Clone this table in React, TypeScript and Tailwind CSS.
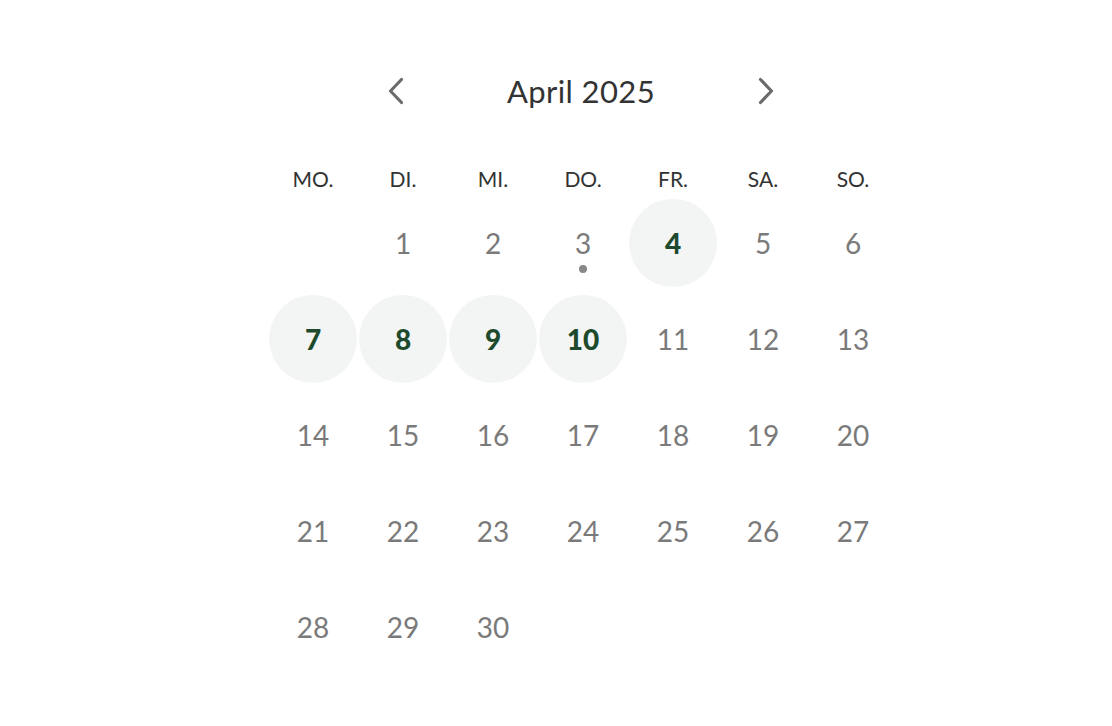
import React from 'react';

const weekdays = ['MO.', 'DI.', 'MI.', 'DO.', 'FR.', 'SA.', 'SO.'];
const highlighted = [4, 7, 8, 9, 10];

const ChevronLeft = () => (
  <svg width="20" height="28" viewBox="0 0 20 28" fill="none">
    <path d="M15.5 2.5 L4.5 14 L15.5 25.5" stroke="#6b6b6b" strokeWidth="3.2" strokeLinecap="round" strokeLinejoin="round" />
  </svg>
);

const ChevronRight = () => (
  <svg width="20" height="28" viewBox="0 0 20 28" fill="none">
    <path d="M4.5 2.5 L15.5 14 L4.5 25.5" stroke="#6b6b6b" strokeWidth="3.2" strokeLinecap="round" strokeLinejoin="round" />
  </svg>
);

export default function App() {
  // April 2025 starts on a Tuesday
  const cells: (number | null)[] = [null];
  for (let d = 1; d <= 30; d++) cells.push(d);

  return (
    <div className="min-h-screen bg-white" style={{ fontFamily: 'Lato, "Open Sans", sans-serif' }}>
      <div className="ml-[268px] w-[630px] pt-[71px]">
        <div className="flex h-[40px] items-center justify-center gap-[100px] pr-[4px]">
          <button className="flex items-center justify-center w-[20px]"><ChevronLeft /></button>
          <h2 className="text-[31px] text-[#333] tracking-[0.4px] w-[150px] text-center">April 2025</h2>
          <button className="flex items-center justify-center w-[20px]"><ChevronRight /></button>
        </div>

        <div className="mt-[52px] grid grid-cols-7 h-[32px]">
          {weekdays.map((w) => (
            <div key={w} className="flex items-center justify-center text-[21px] text-[#333]">{w}</div>
          ))}
        </div>

        <div className="grid grid-cols-7">
          {cells.map((d, i) => (
            <div key={i} className="h-[96px] flex items-center justify-center">
              {d !== null && (
                <div
                  className={
                    highlighted.includes(d)
                      ? 'relative w-[88px] h-[88px] rounded-full bg-[#f3f5f4] flex items-center justify-center text-[28px] font-black text-[#1d4a2c]'
                      : 'relative w-[88px] h-[88px] rounded-full flex items-center justify-center text-[28px] text-[#7a7a7a]'
                  }
                >
                  {d}
                  {d === 3 && <span className="absolute left-1/2 top-[66px] -translate-x-1/2 w-[8px] h-[8px] rounded-full bg-[#888]" />}
                </div>
              )}
            </div>
          ))}
        </div>
      </div>
    </div>
  );
}
